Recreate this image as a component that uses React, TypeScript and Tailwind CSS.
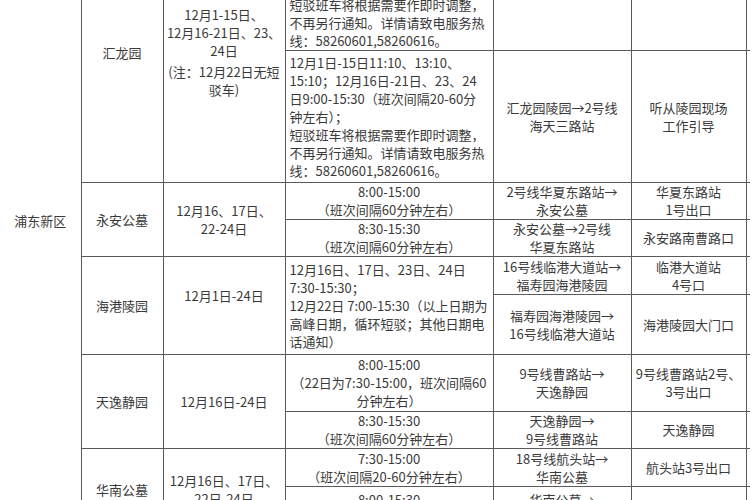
import React from 'react';

type CellProps = {
  lines: string[];
  align?: 'left' | 'center';
  rowSpan?: number;
  extra?: string;
};

const cellBase = 'border border-[#5a5a5a] align-middle py-0 leading-[18px]';

const Cell: React.FC<CellProps> = ({ lines, align = 'center', rowSpan, extra = '' }) => (
  <td
    rowSpan={rowSpan}
    className={`${cellBase} ${align === 'left' ? 'text-left pl-[4px] pr-[2px]' : 'text-center px-[2px]'} ${extra}`}
  >
    {lines.map((line, i) => (
      <div key={i} className="whitespace-nowrap">
        {line}
      </div>
    ))}
  </td>
);

const Blank: React.FC<{ rowSpan?: number }> = ({ rowSpan }) => <td rowSpan={rowSpan} className={cellBase}></td>;

const App: React.FC = () => {
  return (
    <div
      className="w-[750px] h-[500px] overflow-hidden bg-white text-[#3a3a3a] text-[13px]"
      style={{ fontFamily: '"Noto Sans CJK SC", "Noto Sans", sans-serif' }}
    >
      <table className="table-fixed border-collapse mt-[-78px] w-[786px]">
        <colgroup>
          <col className="w-[81px]" />
          <col className="w-[82px]" />
          <col className="w-[122px]" />
          <col className="w-[208px]" />
          <col className="w-[138px]" />
          <col className="w-[115px]" />
          <col className="w-[40px]" />
        </colgroup>
        <tbody>
          {/* 汇龙园 */}
          <tr className="h-[128px]">
            <Cell lines={['浦东新区']} rowSpan={10} extra="border-l-0 pb-[11px]" />
            <Cell lines={['汇龙园']} rowSpan={2} />
            <td rowSpan={2} className={`${cellBase} text-center px-[2px]`}>
              <div>12月1-15日、</div>
              <div>12月16-21日、23、</div>
              <div>24日</div>
              <div className="mt-[3px]">(注：12月22日无短</div>
              <div>驳车)</div>
            </td>
            <Cell
              align="left"
              lines={[
                '12月1日-15日8:30-15:30；',
                '12月16日-21日、23、24日',
                '8:00-15:30（班次间隔20-60分',
                '钟左右）；',
                '短驳班车将根据需要作即时调整，',
                '不再另行通知。详情请致电服务热',
                '线：58260601,58260616。',
              ]}
            />
            <Cell lines={['2号线海天三路站→', '汇龙园陵园']} extra="pb-[10px]" />
            <Cell lines={['海天三路站', '1号口']} extra="pb-[10px]" />
            <Blank />
          </tr>
          <tr className="h-[132px]">
            <Cell
              align="left"
              lines={[
                '12月1日-15日11:10、13:10、',
                '15:10；12月16日-21日、23、24',
                '日9:00-15:30（班次间隔20-60分',
                '钟左右）；',
                '短驳班车将根据需要作即时调整，',
                '不再另行通知。详情请致电服务热',
                '线：58260601,58260616。',
              ]}
            />
            <Cell lines={['汇龙园陵园→2号线', '海天三路站']} />
            <Cell lines={['听从陵园现场', '工作引导']} />
            <Blank />
          </tr>

          {/* 永安公墓 */}
          <tr className="h-[37px]">
            <Cell lines={['永安公墓']} rowSpan={2} />
            <Cell lines={['12月16、17日、', '22-24日']} rowSpan={2} />
            <Cell lines={['8:00-15:00', '（班次间隔60分钟左右）']} />
            <Cell lines={['2号线华夏东路站→', '永安公墓']} />
            <Cell lines={['华夏东路站', '1号出口']} />
            <Blank />
          </tr>
          <tr className="h-[37px]">
            <Cell lines={['8:30-15:30', '（班次间隔60分钟左右）']} />
            <Cell lines={['永安公墓→2号线', '华夏东路站']} />
            <Cell lines={['永安路南曹路口']} />
            <Blank />
          </tr>

          {/* 海港陵园 */}
          <tr className="h-[38px]">
            <Cell lines={['海港陵园']} rowSpan={2} />
            <Cell lines={['12月1日-24日']} rowSpan={2} extra="pb-[20px]" />
            <Cell
              align="left"
              rowSpan={2}
              lines={[
                '12月16日、17日、23日、24日',
                '7:30-15:30；',
                '12月22日 7:00-15:30（以上日期为',
                '高峰日期，循环短驳；其他日期电',
                '话通知）',
              ]}
            />
            <Cell lines={['16号线临港大道站→', '福寿园海港陵园']} />
            <Cell lines={['临港大道站', '4号口']} />
            <Blank />
          </tr>
          <tr className="h-[60px]">
            <Cell lines={['福寿园海港陵园→', '16号线临港大道站']} />
            <Cell lines={['海港陵园大门口']} />
            <Blank />
          </tr>

          {/* 天逸静园 */}
          <tr className="h-[57px]">
            <Cell lines={['天逸静园']} rowSpan={2} />
            <Cell lines={['12月16日-24日']} rowSpan={2} />
            <Cell lines={['8:00-15:00', '（22日为7:30-15:00，班次间隔60', '分钟左右）']} />
            <Cell lines={['9号线曹路站→', '天逸静园']} />
            <Cell lines={['9号线曹路站2号、', '3号出口']} />
            <Blank />
          </tr>
          <tr className="h-[36px]">
            <Cell lines={['8:30-15:30', '（班次间隔60分钟左右）']} />
            <Cell lines={['天逸静园→', '9号线曹路站']} />
            <Cell lines={['天逸静园']} />
            <Blank />
          </tr>

          {/* 华南公墓 */}
          <tr className="h-[38px]">
            <Cell lines={['华南公墓']} rowSpan={2} />
            <Cell lines={['12月16日、17日、', '22日-24日']} rowSpan={2} />
            <Cell lines={['7:30-15:00', '（班次间隔20-60分钟左右）']} />
            <Cell lines={['18号线航头站→', '华南公墓']} />
            <Cell lines={['航头站3号出口']} />
            <Blank />
          </tr>
          <tr className="h-[44px]">
            <Cell lines={['8:00-15:30', '（班次间隔20-60分钟左右）']} />
            <Cell lines={['华南公墓→', '18号线航头站']} />
            <Cell lines={['华南公墓大门口']} />
            <Blank />
          </tr>
        </tbody>
      </table>
    </div>
  );
};

export default App;
